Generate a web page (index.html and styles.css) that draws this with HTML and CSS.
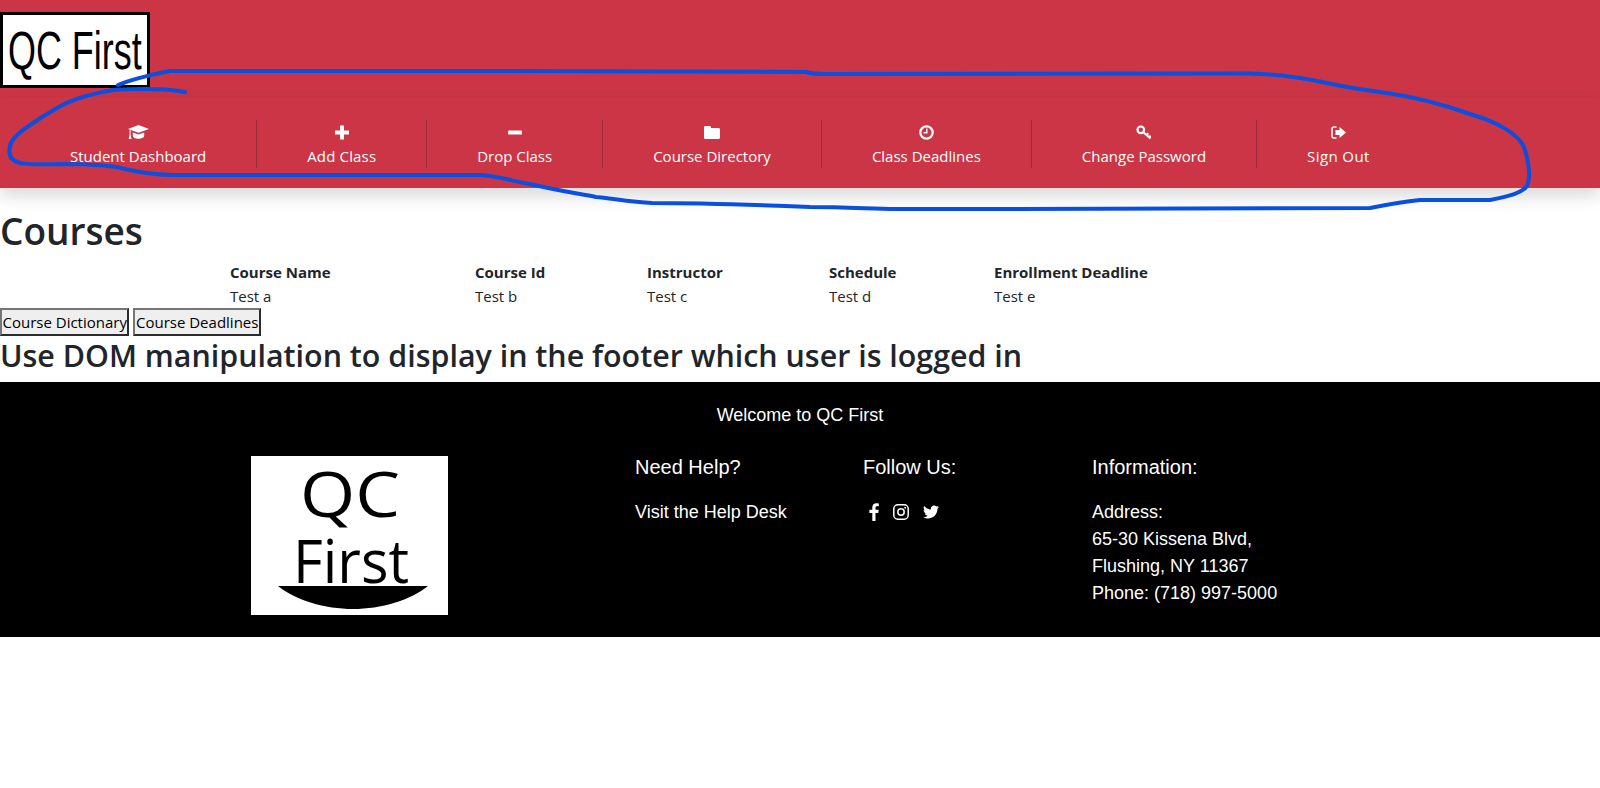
FILE: index.html
```html
<!DOCTYPE html>
<html lang="en">
  <head>
    <meta charset="UTF-8" />
    <meta name="viewport" content="width=device-width, initial-scale=1.0" />
    <title>QC First</title>
    <link rel="stylesheet" href="styles.css">
  </head>
  <body>
    <header class="site-header">
      <div class="brand"><span class="brand-text">QC First</span></div>
      <nav class="main-nav">
        <a class="nav-item" href="#">
          <svg class="nav-icon" width="21" height="16" viewBox="0 0 21 16"><path d="M10.5 0.5 21 4.4 10.5 8.3 0 4.4z"/><path d="M4.8 8v3.2c0 1.7 2.8 3 5.7 3s5.7-1.3 5.7-3V8l-5.7 2.1z"/><path d="M1.6 5.4h1v5l.9 4.1H.7l.9-4.1z"/></svg>
          <span>Student Dashboard</span>
        </a>
        <a class="nav-item nav-add" href="#">
          <svg class="nav-icon" width="14" height="14" viewBox="0 0 13 13"><path d="M4.7 0h3.6v4.7H13v3.6H8.3V13H4.7V8.300H0V4.700h4.700z"/></svg>
          <span>Add Class</span>
        </a>
        <a class="nav-item" href="#">
          <svg class="nav-icon" width="14" height="14" viewBox="0 0 13 13"><rect y="4.700" width="13" height="3.600" rx=".6"/></svg>
          <span>Drop Class</span>
        </a>
        <a class="nav-item" href="#">
          <svg class="nav-icon" width="16" height="14" viewBox="0 0 16 13"><path d="M1.5 0h4C6.3 0 7 .7 7 1.500V2h7.500c.8 0 1.500.7 1.500 1.500v8c0 .8-.7 1.500-1.500 1.500h-13C.7 13 0 12.300 0 11.500v-10C0 .7.7 0 1.500 0z"/></svg>
          <span>Course Directory</span>
        </a>
        <a class="nav-item" href="#">
          <svg class="nav-icon" width="15" height="15" viewBox="0 0 15 15"><circle cx="7.500" cy="7.500" r="6.200" fill="none" stroke="#fff" stroke-width="2.200"/><path d="M8.500 3.500v5h-4V7h2.600V3.500z"/></svg>
          <span>Class Deadlines</span>
        </a>
        <a class="nav-item" href="#">
          <svg class="nav-icon" width="16" height="15" viewBox="0 0 16 15"><circle cx="4.800" cy="4.800" r="3.300" fill="none" stroke="#fff" stroke-width="2.200"/><path d="M7 7l7.500 6.500M10.500 10l1.800-1.800M13 12.300l1.600-1.600" fill="none" stroke="#fff" stroke-width="2"/></svg>
          <span>Change Password</span>
        </a>
        <a class="nav-item nav-out" href="#">
          <svg class="nav-icon" width="15" height="13" viewBox="0 0 15 13"><path d="M5.500 1H3C1.800 1 1 1.800 1 3v7c0 1.200.8 2 2 2h2.500" fill="none" stroke="#fff" stroke-width="1.500"/><path d="M8.500 1 15 6.500 8.500 12V9H4.500V4h4z"/></svg>
          <span>Sign Out</span>
        </a>
      </nav>
    </header>

    <main class="content">
      <h1>Courses</h1>
      <table class="course-table">
        <thead>
          <tr>
            <th class="col-name">Course Name</th>
            <th class="col-id">Course Id</th>
            <th class="col-instructor">Instructor</th>
            <th class="col-schedule">Schedule</th>
            <th>Enrollment Deadline</th>
          </tr>
        </thead>
        <tbody>
          <tr>
            <td>Test a</td>
            <td>Test b</td>
            <td>Test c</td>
            <td>Test d</td>
            <td>Test e</td>
          </tr>
        </tbody>
      </table>
      <div class="actions">
        <button type="button">Course Dictionary</button>
        <button type="button">Course Deadlines</button>
      </div>
      <h2>Use DOM manipulation to display in the footer which user is logged in</h2>
    </main>

    <footer class="site-footer">
      <p class="welcome">Welcome to QC First</p>
      <div class="footer-cols">
        <svg class="footer-logo" width="197" height="159" viewBox="0 0 197 159">
          <rect width="197" height="159" fill="#fff"/>
          <text class="logo-text" x="49" y="61" font-size="62" textLength="100" lengthAdjust="spacingAndGlyphs">QC</text>
          <text class="logo-text" x="42" y="127" font-size="60" textLength="116" lengthAdjust="spacingAndGlyphs">First</text>
          <path d="M27 130H177C160 144 130 153 102 153S44 144 27 130z"/>
        </svg>
        <div class="footer-col">
          <h4>Need Help?</h4>
          <p>Visit the Help Desk</p>
        </div>
        <div class="footer-col">
          <h4>Follow Us:</h4>
          <div class="social">
            <svg width="10" height="18" viewBox="0 0 10 18"><path d="M6.500 18V10h2.700l.5-3.200H6.500V4.900c0-.9.300-1.600 1.600-1.600h1.700V.4C9.500.3 8.500.200 7.400.200 5 .2 3.300 1.700 3.300 4.400v2.400H.4V10h2.900v8z"/></svg>
            <svg width="16" height="16" viewBox="0 0 16 16"><rect x=".8" y=".8" width="14.400" height="14.400" rx="4" fill="none" stroke="#fff" stroke-width="1.500"/><circle cx="8" cy="8" r="3.200" fill="none" stroke="#fff" stroke-width="1.500"/><circle cx="12.200" cy="3.800" r="1"/></svg>
            <svg width="16" height="14" viewBox="0 0 24 20"><path d="M24 2.557c-.883.392-1.832.656-2.828.775 1.017-.609 1.798-1.574 2.165-2.724-.951.564-2.005.974-3.127 1.195C19.313.846 18.032.248 16.616.248c-3.179 0-5.515 2.966-4.797 6.045C7.728 6.088 4.100 4.128 1.671 1.149.381 3.362 1.002 6.257 3.194 7.723c-.806-.026-1.566-.247-2.229-.616-.054 2.281 1.581 4.415 3.949 4.890-.693.188-1.452.232-2.224.084.626 1.956 2.444 3.379 4.600 3.419C5.220 17.123 2.612 17.848 0 17.540c2.179 1.397 4.768 2.212 7.548 2.212 9.142 0 14.307-7.721 14.076-14.646.962-.695 1.797-1.562 2.457-2.549z"/></svg>
          </div>
        </div>
        <div class="footer-col">
          <h4>Information:</h4>
          <p>Address:<br>65-30 Kissena Blvd,<br>Flushing, NY 11367<br>Phone: (718) 997-5000</p>
        </div>
      </div>
    </footer>

    <!-- pen mark drawn over the nav in the screenshot -->
    <svg class="pen-mark" width="1600" height="788" viewBox="0 0 1600 788">
      <path d="M118 85C132 79 150 75 170 71H500L806 72C812 74 820 74 826 74L1250 73.500C1275 74 1300 77 1327 83C1345 87 1365 90 1380 92C1410 96 1440 103 1473 115C1490 120 1520 132 1525 150C1530 165 1530 180 1527 186C1522 193 1510 196 1490 200H1420C1400 202 1380 206 1370 208L1000 209H900C880 209.500 850 207 810 207C760 205 710 203 652 203C630 202 610 198 596 197C575 193 555 190 530 184C515 182 500 176 480 175L173 175C155 175 143 173 125 169C115 166 100 164 60 164C30 165 12 165 10 155C7 143 15 135 30 125C40 118 50 112 57 108C70 100 85 95 113 90C130 89 165 88 185 92" fill="none" stroke="#0a50e0" stroke-width="4" stroke-linecap="round" stroke-linejoin="round"/>
    </svg>
  </body>
</html>
```

FILE: styles.css
```css
html, body {
  margin: 0;
  background-color: #fff;
}
body {
  position: relative;
  min-height: 788px;
  overflow: hidden;
  font-family: "Open Sans", "Noto Sans", sans-serif;
  font-size: 15px;
  line-height: 24px;
  color: #212529;
}

/* header */
.site-header {
  background-color: #cb3545;
}
.brand {
  box-sizing: border-box;
  width: 150px;
  height: 76px;
  border: 3px solid #000;
  background-color: #fff;
  overflow: hidden;
  position: relative;
  top: 12px;
}
.brand-text {
  display: block;
  width: 200px;
  font-family: "Liberation Sans", sans-serif;
  font-size: 54px;
  line-height: 70px;
  color: #000;
  white-space: nowrap;
  transform: scaleX(.665);
  transform-origin: left center;
  margin-left: 5px;
}
.main-nav {
  display: flex;
  margin-top: 21px;
  padding: 23px 0 20px 20px;
  background-color: #cb3545;
  box-shadow: 0 8px 16px rgba(0, 0, 0, .15);
}
.nav-item {
  display: flex;
  flex-direction: column;
  align-items: center;
  height: 48px;
  padding: 0 50px;
  border-right: 1px solid #9c2a3a;
  color: #fff;
  text-decoration: none;
  white-space: nowrap;
}
.nav-item:last-child {
  border-right: none;
}
.nav-add span {
  letter-spacing: .15px;
}
.nav-out span {
  letter-spacing: .4px;
}
.nav-icon {
  height: 24px;
  fill: #fff;
  margin-top: 1px;
}

/* courses */
.content {
  overflow: hidden;
}
h1 {
  margin: 19px 0 0;
  font-size: 37px;
  font-weight: 600;
  line-height: 48px;
}
h2 {
  margin: 1px 0 7px;
  font-size: 30.400px;
  font-weight: 600;
  line-height: 38px;
}
.course-table {
  margin: 5px 0 0 230px;
  border-collapse: collapse;
}
.course-table th,
.course-table td {
  padding: 0;
  text-align: left;
  white-space: nowrap;
}
.col-name { width: 245px; }
.col-id { width: 172px; }
.col-instructor { width: 182px; }
.col-schedule { width: 165px; }
.actions {
  display: flex;
  gap: 4px;
}
.actions button {
  height: 28px;
  padding: 0 .5px;
  border: 2px solid;
  border-color: #767676 #2b2b2b #2b2b2b #767676;
  border-radius: 0;
  background-color: #efefef;
  color: #000;
  font-family: "Open Sans", sans-serif;
  font-size: 15px;
}

/* footer */
.site-footer {
  height: 255px;
  box-sizing: border-box;
  padding-top: 20px;
  background-color: #000;
  color: #fff;
  font-family: "Liberation Sans", sans-serif;
  font-size: 18px;
  line-height: 27px;
}
.welcome {
  margin: 0 0 27px;
  text-align: center;
}
.footer-cols {
  display: grid;
  grid-template-columns: 384px 228px 229px auto;
  padding-left: 251px;
}
.footer-logo {
  overflow: visible;
}
.footer-col h4 {
  margin: 0 0 21px;
  font-size: 20px;
  font-weight: 400;
  line-height: 22px;
}
.footer-col p {
  margin: 0;
}
.logo-text {
  font-family: "Open Sans", sans-serif;
  fill: #000;
}
.social {
  display: flex;
  align-items: center;
  gap: 14px;
  height: 25px;
  padding-left: 6px;
}
.social svg {
  fill: #fff;
}

/* pen mark */
.pen-mark {
  position: absolute;
  top: 0;
  left: 0;
  pointer-events: none;
}
```
